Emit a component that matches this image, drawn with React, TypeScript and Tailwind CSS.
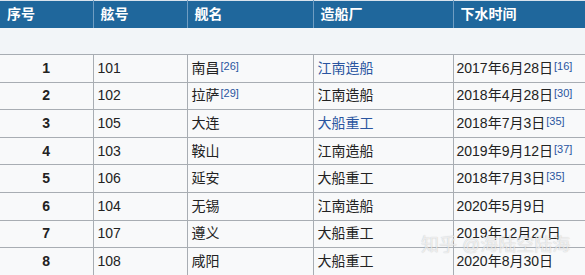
import React from 'react'

type Row = {
    no: number
    hull: string
    name: string
    nameRef?: string
    yard: string
    yardLink?: boolean
    date: string
    dateRef?: string
}

const rows: Row[] = [
    { no: 1, hull: '101', name: '南昌', nameRef: '26', yard: '江南造船', yardLink: true, date: '2017年6月28日', dateRef: '16' },
    { no: 2, hull: '102', name: '拉萨', nameRef: '29', yard: '江南造船', date: '2018年4月28日', dateRef: '30' },
    { no: 3, hull: '105', name: '大连', yard: '大船重工', yardLink: true, date: '2018年7月3日', dateRef: '35' },
    { no: 4, hull: '103', name: '鞍山', yard: '江南造船', date: '2019年9月12日', dateRef: '37' },
    { no: 5, hull: '106', name: '延安', yard: '大船重工', date: '2018年7月3日', dateRef: '35' },
    { no: 6, hull: '104', name: '无锡', yard: '江南造船', date: '2020年5月9日' },
    { no: 7, hull: '107', name: '遵义', yard: '大船重工', date: '2019年12月27日' },
    { no: 8, hull: '108', name: '咸阳', yard: '大船重工', date: '2020年8月30日' },
]

const headers = ['序号', '舷号', '舰名', '造船厂', '下水时间']
const widths = ['w-[93px]', 'w-[94px]', 'w-[126px]', 'w-[140px]', 'w-[132px]']

function Ref({ n }: { n?: string }) {
    if (!n) return null
    return <sup className="relative -top-[3px] ml-[1px] text-[11px] text-[#2a55a0]">[{n}]</sup>
}

export default function App() {
    return (
        <div
            className="relative h-[275px] w-[585px] overflow-hidden bg-white text-[14px] text-[#222]"
            style={{ fontFamily: '"Liberation Sans", "Noto Sans CJK SC", sans-serif' }}
        >
            <table className="w-[585px] table-fixed border-collapse">
                <colgroup>
                    {widths.map((w) => (
                        <col key={w} className={w} />
                    ))}
                </colgroup>
                <thead>
                    <tr className="h-[27px] border-t border-[#d8e2ec] bg-[#1f679c] text-white">
                        {headers.map((h, i) => (
                            <th
                                key={h}
                                className={`px-[7px] text-left text-[14px] font-bold ${i > 0 ? 'border-l border-[#6f9dc2]' : ''}`}
                            >
                                {h}
                            </th>
                        ))}
                    </tr>
                </thead>
                <tbody>
                    <tr className="h-[27px] bg-[#f2f5f8]">
                        <td colSpan={5} />
                    </tr>
                    {rows.map((r) => (
                        <tr key={r.no} className="h-[27.6px] bg-[#f8f9fa]">
                            <td className="border border-l-0 border-[#a8adb3] text-center font-bold">{r.no}</td>
                            <td className="border border-[#a8adb3] px-[4px]">{r.hull}</td>
                            <td className="border border-[#a8adb3] px-[4px]">
                                {r.name}
                                <Ref n={r.nameRef} />
                            </td>
                            <td className={`border border-[#a8adb3] px-[4px] ${r.yardLink ? 'text-[#2a55a0]' : ''}`}>
                                {r.yard}
                            </td>
                            <td className="border border-r-0 border-[#a8adb3] px-[3px]">
                                {r.date}
                                <Ref n={r.dateRef} />
                            </td>
                        </tr>
                    ))}
                </tbody>
            </table>
            <div className="absolute left-[421px] top-[234px] whitespace-nowrap text-[18px] leading-[22px] text-white/70 [text-shadow:0_0_1px_rgba(0,0,0,0.25)]">
                知乎 @海陆空陆海
            </div>
        </div>
    )
}
